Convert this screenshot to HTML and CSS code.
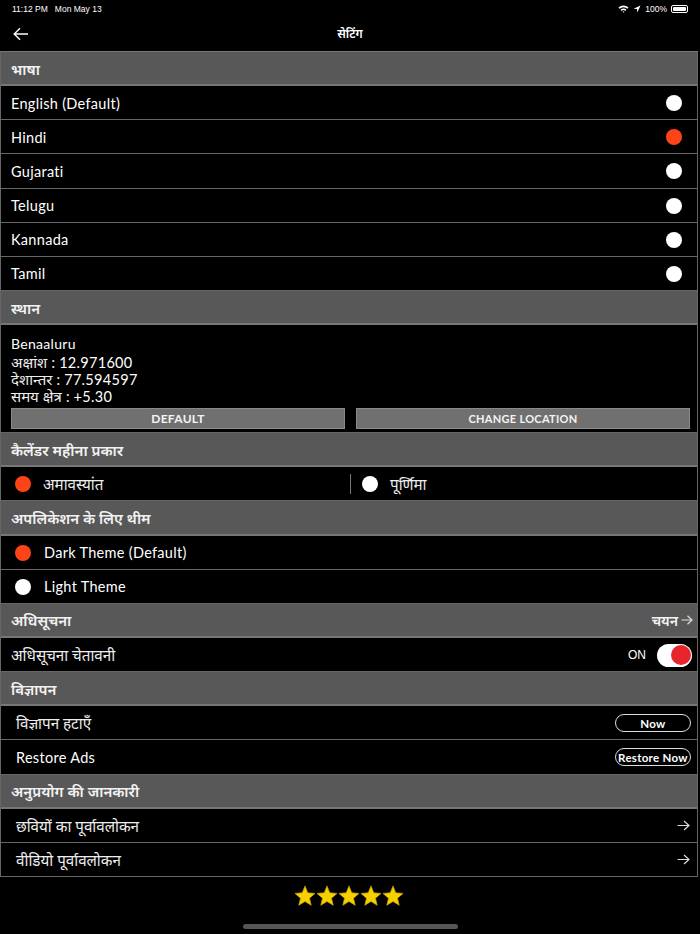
FILE: index.html
```html
<!DOCTYPE html>
<html lang="hi">
<head>
<meta charset="utf-8">
<link rel="stylesheet" href="styles.css">
</head>
<body>
<div class="status">
  <span class="time">11:12 PM&nbsp;&nbsp;&nbsp;Mon May 13</span>
  <span class="sys">
    <svg width="11" height="8" viewBox="0 0 11 8"><path d="M0.5 2.6 A7 7 0 0 1 10.5 2.6 L9.3 3.8 A5.3 5.3 0 0 0 1.7 3.8 Z M2.6 4.7 A4 4 0 0 1 8.4 4.7 L7.2 5.9 A2.3 2.3 0 0 0 3.8 5.9 Z M4.6 6.8 A1.3 1.3 0 0 1 6.4 6.8 L5.5 7.8 Z" fill="#fff"/></svg>
    <svg width="8" height="8" viewBox="0 0 8 8"><path d="M7.5 0.5 L0.5 3.7 L4 4 L4.3 7.5 Z" fill="#fff"/></svg>
    <span>100%</span>
    <span class="batt"><span class="batt-fill"></span></span>
  </span>
</div>
<div class="nav">
  <svg class="back" width="16" height="14" viewBox="0 0 16 14"><path d="M15 7 H1.5 M7 1.2 L1.2 7 L7 12.8" stroke="#fff" stroke-width="1.4" fill="none"/></svg>
  <div class="title">सेटिंग</div>
</div>

<div class="list">
  <div class="head">भाषा</div>
  <div class="row"><span class="en">English (Default)</span><span class="radio"></span></div>
  <div class="row"><span class="en">Hindi</span><span class="radio on"></span></div>
  <div class="row"><span class="en">Gujarati</span><span class="radio"></span></div>
  <div class="row"><span class="en">Telugu</span><span class="radio"></span></div>
  <div class="row"><span class="en">Kannada</span><span class="radio"></span></div>
  <div class="row"><span class="en">Tamil</span><span class="radio"></span></div>

  <div class="head">स्थान</div>
  <div class="loc">
    <div class="en city">Benaaluru</div>
    <div class="ll">अक्षांश : <span class="en">12.971600</span></div>
    <div class="ll">देशान्तर : <span class="en">77.594597</span></div>
    <div class="ll">समय क्षेत्र : <span class="en">+5.30</span></div>
    <div class="btns">
      <div class="btn en big">DEFAULT</div>
      <div class="btn en">CHANGE LOCATION</div>
    </div>
  </div>

  <div class="head">कैलेंडर महीना प्रकार</div>
  <div class="row split">
    <div class="half"><span class="radio on"></span><span class="hi">अमावस्यांत</span></div>
    <div class="vsep"></div>
    <div class="half"><span class="radio"></span><span class="hi">पूर्णिमा</span></div>
  </div>

  <div class="head">अपलिकेशन के लिए थीम</div>
  <div class="row lead"><span class="radio on"></span><span class="en">Dark Theme (Default)</span></div>
  <div class="row lead"><span class="radio"></span><span class="en">Light Theme</span></div>

  <div class="head between"><span>अधिसूचना</span><span class="pick">चयन <svg width="12" height="10" viewBox="0 0 12 10"><path d="M0.5 5 H11 M6.5 0.8 L11 5 L6.5 9.2" stroke="#ddd" stroke-width="1.2" fill="none"/></svg></span></div>
  <div class="row"><span class="hi">अधिसूचना चेतावनी</span><span class="toggle-wrap"><span class="on-label">ON</span><span class="toggle"><span class="knob"></span></span></span></div>

  <div class="head">विज्ञापन</div>
  <div class="row ind"><span class="hi">विज्ञापन हटाएँ</span><span class="pill en">Now</span></div>
  <div class="row ind"><span class="en">Restore Ads</span><span class="pill en">Restore Now</span></div>

  <div class="head">अनुप्रयोग की जानकारी</div>
  <div class="row ind"><span class="hi">छवियों का पूर्वावलोकन</span><svg class="arr" width="13" height="11" viewBox="0 0 13 11"><path d="M0.5 5.5 H12 M7 1 L12 5.5 L7 10" stroke="#ddd" stroke-width="1.2" fill="none"/></svg></div>
  <div class="row ind"><span class="hi">वीडियो पूर्वावलोकन</span><svg class="arr" width="13" height="11" viewBox="0 0 13 11"><path d="M0.5 5.5 H12 M7 1 L12 5.5 L7 10" stroke="#ddd" stroke-width="1.2" fill="none"/></svg></div>
</div>

<div class="stars">
  <svg width="22" height="21" viewBox="0 0 24 23"><path d="M12 1 L15 8.6 L23 9.2 L16.9 14.4 L18.8 22.2 L12 18 L5.2 22.2 L7.1 14.4 L1 9.2 L9 8.6 Z" fill="#f6d000" stroke="#c9a200" stroke-width="0.8"/></svg>
  <svg width="22" height="21" viewBox="0 0 24 23"><path d="M12 1 L15 8.6 L23 9.2 L16.9 14.4 L18.8 22.2 L12 18 L5.2 22.2 L7.1 14.4 L1 9.2 L9 8.6 Z" fill="#f6d000" stroke="#c9a200" stroke-width="0.8"/></svg>
  <svg width="22" height="21" viewBox="0 0 24 23"><path d="M12 1 L15 8.6 L23 9.2 L16.9 14.4 L18.8 22.2 L12 18 L5.2 22.2 L7.1 14.4 L1 9.2 L9 8.6 Z" fill="#f6d000" stroke="#c9a200" stroke-width="0.8"/></svg>
  <svg width="22" height="21" viewBox="0 0 24 23"><path d="M12 1 L15 8.6 L23 9.2 L16.9 14.4 L18.8 22.2 L12 18 L5.2 22.2 L7.1 14.4 L1 9.2 L9 8.6 Z" fill="#f6d000" stroke="#c9a200" stroke-width="0.8"/></svg>
  <svg width="22" height="21" viewBox="0 0 24 23"><path d="M12 1 L15 8.6 L23 9.2 L16.9 14.4 L18.8 22.2 L12 18 L5.2 22.2 L7.1 14.4 L1 9.2 L9 8.6 Z" fill="#f6d000" stroke="#c9a200" stroke-width="0.8"/></svg>
</div>
<div class="home"></div>
</body>
</html>
```

FILE: styles.css
```css
* { box-sizing: border-box; }
html, body { margin: 0; padding: 0; background: #000; }
body {
  width: 700px;
  height: 934px;
  color: #fff;
  font-family: "Noto Sans", "Noto Sans Devanagari", "Lato", sans-serif;
  overflow: hidden;
}
.en { font-family: "Lato", "Noto Sans", sans-serif; letter-spacing: 0.3px; }
.status {
  height: 18px;
  display: flex;
  justify-content: space-between;
  align-items: center;
  padding: 0 12px 0 12px;
  font-family: "Liberation Sans", sans-serif;
  font-size: 8.5px;
}
.sys { display: flex; align-items: center; gap: 4px; }
.batt {
  width: 17px; height: 8px; border: 1px solid #fff; border-radius: 2px; padding: 1px;
  display: inline-flex; position: relative;
}
.batt-fill { flex: 1; background: #fff; border-radius: 1px; }
.nav {
  height: 33px;
  display: flex;
  align-items: center;
  justify-content: center;
  position: relative;
}
.back { position: absolute; left: 13px; top: 9px; }
.title { font-size: 12px; font-weight: 600; margin-top: -2px; }
.list {
  width: 698px;
  border-left: 1px solid #666;
  border-right: 1px solid #666;
  border-top: 1px solid #777;
}
.head {
  height: 34.15px;
  background: #585858;
  border-bottom: 2px solid #777;
  display: flex;
  align-items: center;
  padding: 1px 10px 0;
  font-size: 15px;
  font-weight: 600;
  color: #f2f2f2;
}
.head.between { justify-content: space-between; padding-right: 4px; }
.pick { display: flex; align-items: center; gap: 3px; font-size: 14px; }
.row {
  height: 34.15px;
  border-bottom: 1px solid #666;
  display: flex;
  align-items: center;
  justify-content: space-between;
  padding: 1px 15px 0 10px;
  font-size: 14.5px;
}
.row.ind { padding-left: 15px; padding-right: 6px; }
.row.lead { justify-content: flex-start; gap: 13px; padding-left: 14px; }
.hi { font-size: 15.2px; color: #eee; }
.radio {
  width: 16px; height: 16px; border-radius: 50%; background: #fff; display: inline-block; flex: none;
}
.radio.on { background: #fc4418; }
.loc {
  height: 108px;
  padding: 9px 7px 0 10px;
  border-bottom: 1px solid #666;
}
.city { font-size: 14px; line-height: 20px; }
.ll { font-size: 15px; line-height: 17px; color: #eee; }
.ll .en { font-size: 14.5px; color: #fff; }
.btns { display: flex; gap: 11px; margin-top: 3px; }
.btn {
  flex: 1;
  height: 21px;
  background: #707070;
  border: 1px solid #8a8a8a;
  display: flex;
  align-items: center;
  justify-content: center;
  font-size: 11px;
  font-weight: 700;
  color: #f4f4f4;
}
.btn.big { font-size: 12px; }
.row.split { padding: 0; justify-content: flex-start; }
.half { flex: 1; display: flex; align-items: center; gap: 12px; padding-left: 14px; }
.half:last-child { padding-left: 11px; }
.vsep { width: 1px; height: 20px; background: #777; }
.toggle-wrap { display: flex; align-items: center; gap: 11px; margin-right: -10px; }
.on-label { font-family: "Liberation Sans", sans-serif; font-size: 12px; }
.toggle {
  width: 35px; height: 23px; border-radius: 12px; background: #fff; display: flex; align-items: center; justify-content: flex-end; padding: 1px;
}
.knob { width: 20px; height: 20px; border-radius: 50%; background: #e6262b; }
.pill {
  border: 1px solid #ddd;
  border-radius: 9px;
  height: 18px;
  width: 76px;
  display: flex; align-items: center; justify-content: center;
  font-size: 11.5px; font-weight: 700;
}
.arr { margin-right: 1px; }
.stars {
  display: flex;
  justify-content: center;
  gap: 0px;
  margin-top: 8px;
  padding-right: 2px;
}
.home {
  width: 215px; height: 5px; border-radius: 3px; background: #555;
  margin: 18px auto 0;
}
```
